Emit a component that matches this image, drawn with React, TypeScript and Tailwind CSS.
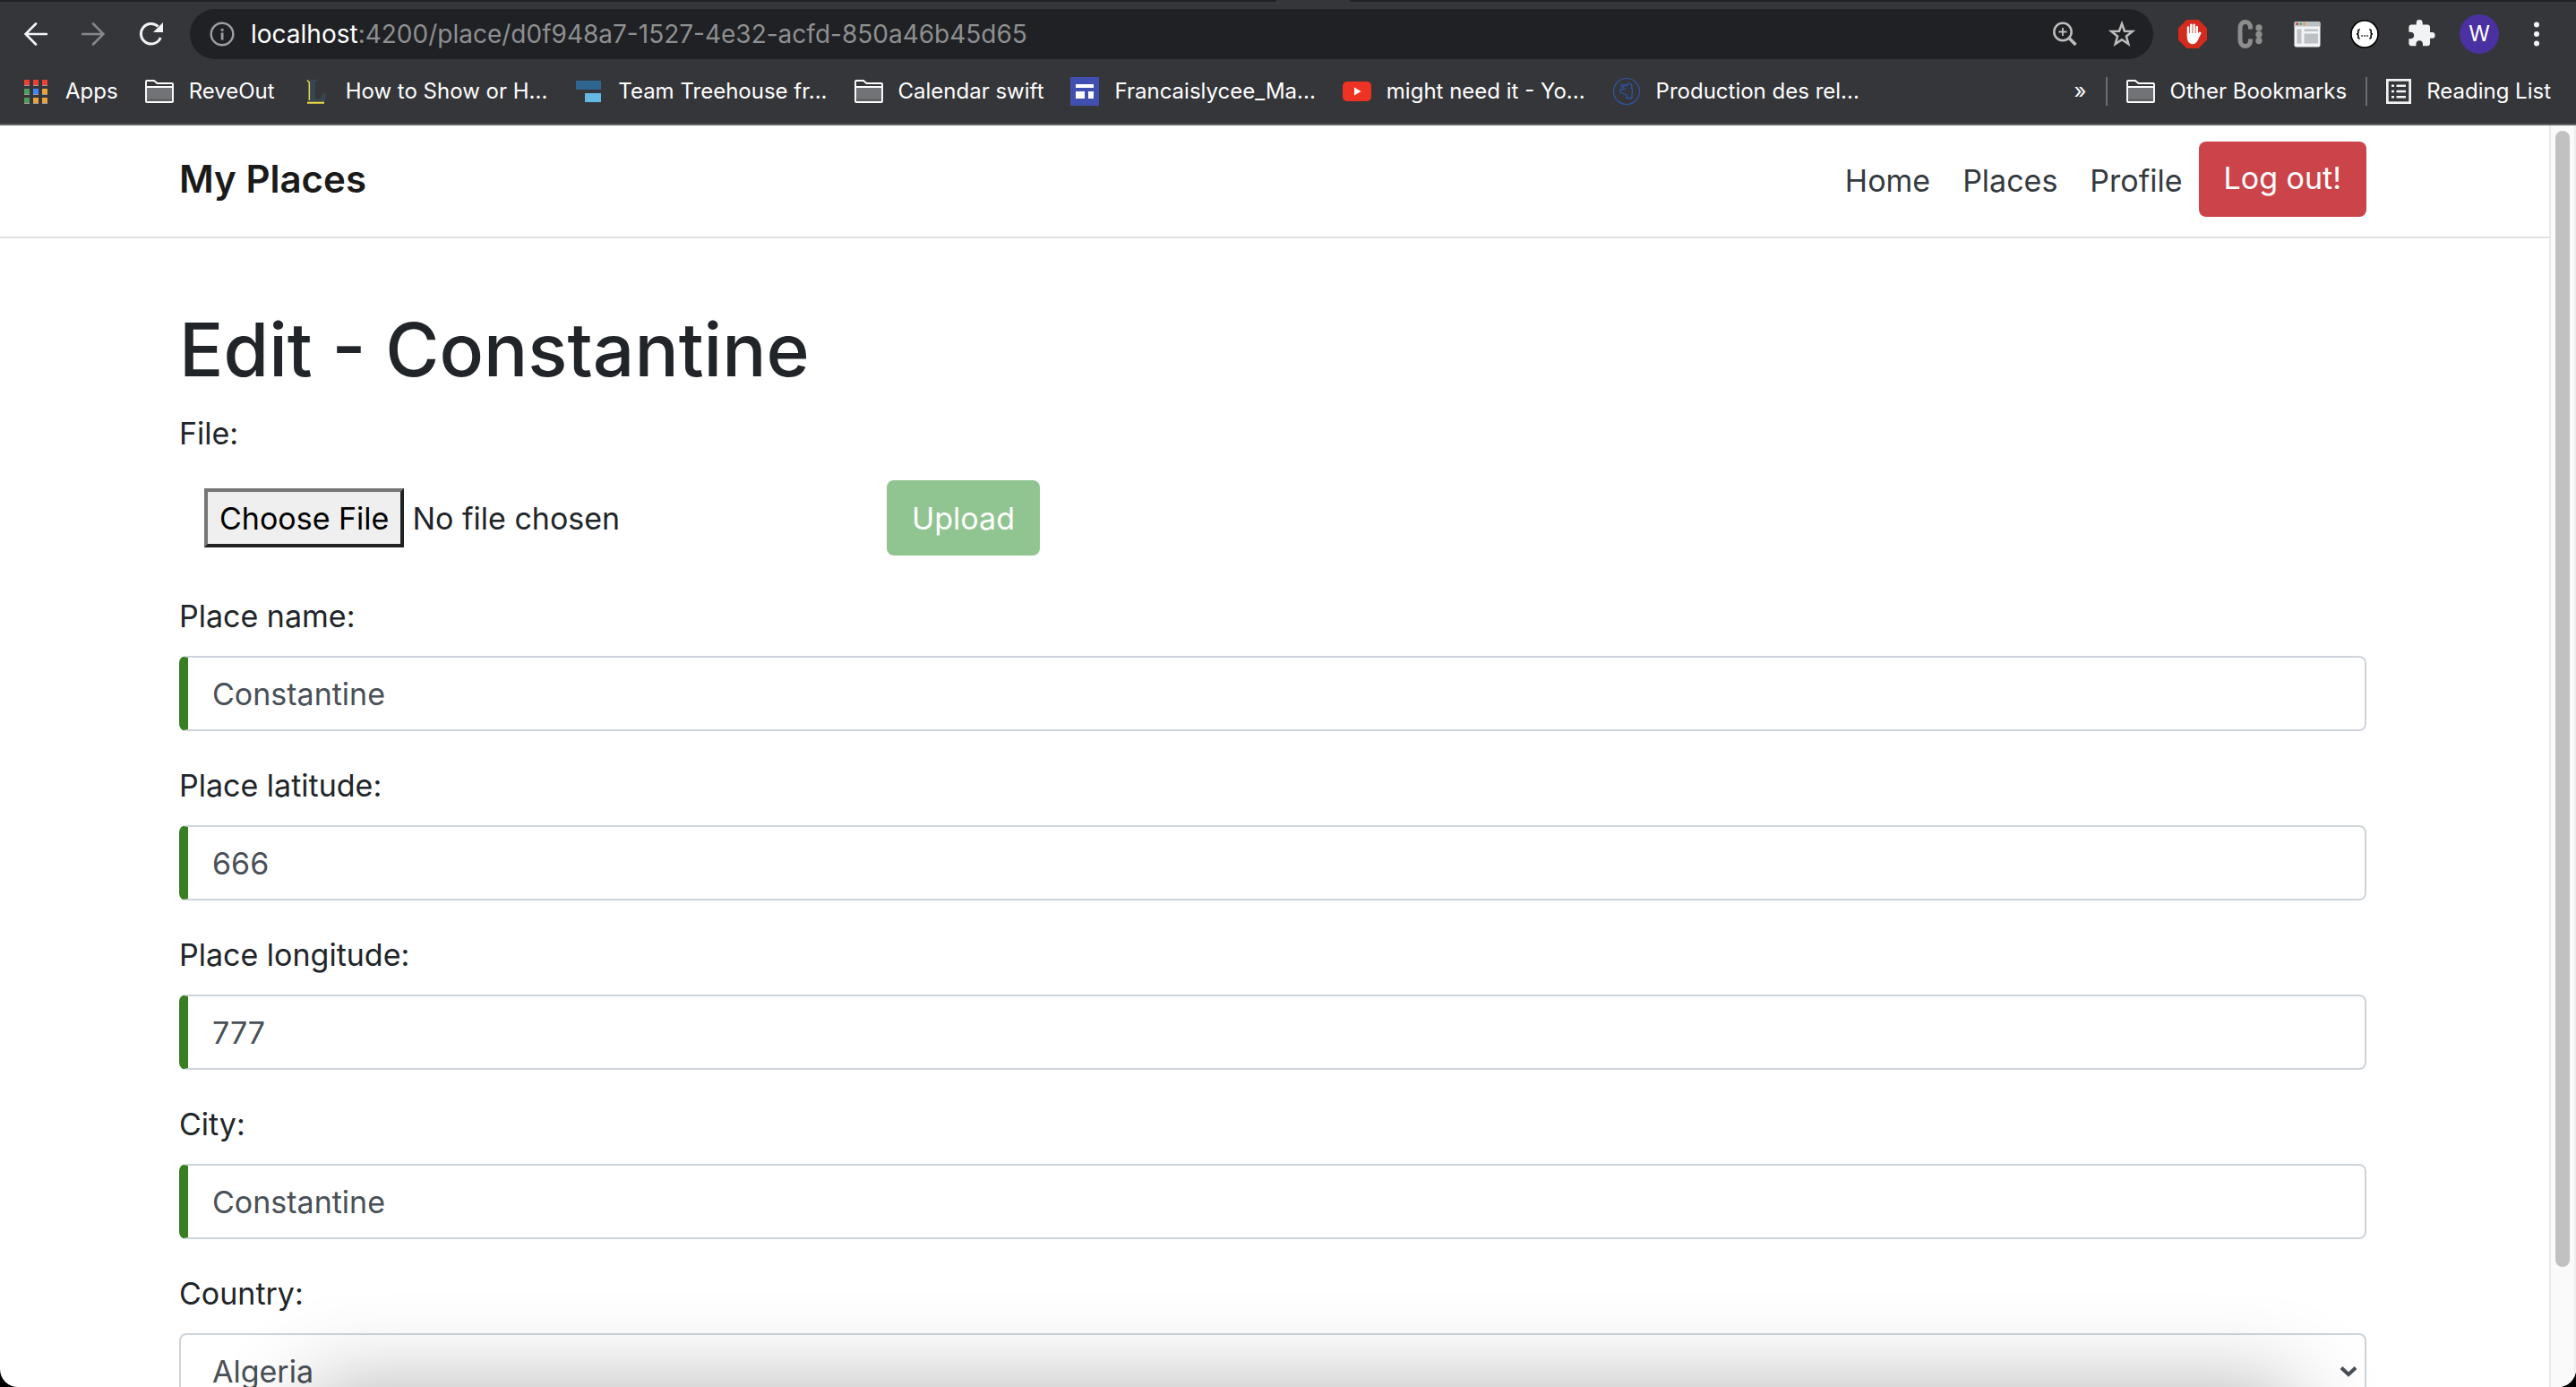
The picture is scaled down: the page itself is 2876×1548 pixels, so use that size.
import React, { useState } from "react";

function BackIcon() {
  return (
    <svg viewBox="0 0 26 26" className="size-[26px]" fill="none" stroke="currentColor" strokeWidth="2.6" strokeLinecap="round">
      <path d="M25 13H2M13 1.500L1.500 13L13 24.500" />
    </svg>
  );
}

function ForwardIcon() {
  return (
    <svg viewBox="0 0 26 26" className="size-[26px]" fill="none" stroke="currentColor" strokeWidth="2.6" strokeLinecap="round">
      <path d="M1 13H24M13 1.500L24.500 13L13 24.500" />
    </svg>
  );
}

function ReloadIcon() {
  return (
    <svg viewBox="0 0 28 28" className="size-7">
      <path d="M24.200 18A11.300 11.300 0 1 1 21.500 5.500" fill="none" stroke="currentColor" strokeWidth="3" />
      <path d="M27 1V12H16Z" fill="currentColor" />
    </svg>
  );
}

function InfoIcon() {
  return (
    <svg viewBox="0 0 28 28" className="size-7 text-[#9aa0a6]">
      <circle cx="14" cy="14" r="12.300" fill="none" stroke="currentColor" strokeWidth="2.400" />
      <path d="M12.700 8h2.800v2.800h-2.800zM12.700 12.500h2.800v8h-2.800z" fill="currentColor" />
    </svg>
  );
}

function ZoomIcon() {
  return (
    <svg viewBox="0 0 28 28" className="size-7" fill="none" stroke="currentColor">
      <circle cx="12" cy="11.500" r="9.700" strokeWidth="2.500" />
      <path d="M12 7v9M7.500 11.500h9" strokeWidth="1.800" />
      <path d="M19 18.500L26.500 26" strokeWidth="3.600" />
    </svg>
  );
}

function StarIcon() {
  return (
    <svg viewBox="0 0 30 30" className="size-[30px]" fill="none" stroke="currentColor" strokeWidth="2.500">
      <path d="M15 3.500L18 11.700L26.800 12L19.900 17.500L22.300 26L15 21.200L7.700 26L10.100 17.500L3.200 12L12 11.700Z" />
    </svg>
  );
}

function AdblockIcon() {
  return (
    <svg viewBox="0 0 32 32" className="size-8">
      <path d="M9.400 0H22.600L32 9.400V22.600L22.600 32H9.400L0 22.600V9.400Z" fill="#d52b1e" />
      <g fill="none" stroke="#fff" strokeWidth="2.500" strokeLinecap="round">
        <path d="M11 18V8.500M14.300 16V5.800M17.600 16V5.800M20.800 18V8" />
        <path d="M24 15L20.500 21.500" strokeWidth="3" />
      </g>
      <path d="M9.800 15H22V19L24 16C23 20 21.500 27.200 16 27.200C11.500 27.200 9.800 23.500 9.800 19Z" fill="#fff" />
    </svg>
  );
}

function ColonIcon() {
  return (
    <svg viewBox="0 0 32 32" className="size-8">
      <path d="M16.500 10.500V9C16.500 5 14.500 2.500 11 2.500C7 2.500 5 5.500 5 9.500V22.500C5 26.500 7 29.500 11 29.500C14.500 29.500 16.500 27 16.500 23V21.500" fill="none" stroke="#8d8d8d" strokeWidth="5" />
      <g fill="#8d8d8d">
        <circle cx="26" cy="9" r="3.700" />
        <circle cx="26" cy="16.500" r="3.700" />
        <circle cx="26" cy="23.500" r="3.700" />
      </g>
    </svg>
  );
}

function WindowIcon() {
  return (
    <svg viewBox="-1 -1 32 32" className="size-8">
      <rect x="0.500" y="1" width="29" height="28.500" rx="2" fill="#f1f3f4" />
      <path d="M0.500 6.500V3a2 2 0 0 1 2-2h25a2 2 0 0 1 2 2V6.500Z" fill="#bdc1c6" />
      <rect x="2.500" y="2.500" width="2.200" height="2.400" fill="#c5221f" />
      <rect x="6.500" y="2.500" width="2.200" height="2.400" fill="#34a853" />
      <rect x="10.500" y="2.500" width="2.200" height="2.400" fill="#f29900" />
      <g fill="#bdc1c6">
        <rect x="3.500" y="9.500" width="5" height="16" />
        <rect x="11.500" y="9.500" width="15.500" height="2.500" />
        <rect x="11.500" y="14.500" width="15.500" height="11" />
      </g>
    </svg>
  );
}

function BracesIcon() {
  return (
    <svg viewBox="0 0 32 32" className="size-8" fill="none" stroke="#000" strokeWidth="1.600">
      <circle cx="16" cy="16" r="15" fill="#fff" strokeWidth="1.500" />
      <path d="M10.800 11C8.300 11 8.900 12.500 8.900 14C8.900 15.300 8.400 16 7 16C8.400 16 8.900 16.700 8.900 18C8.900 19.500 8.300 21 10.800 21" />
      <path d="M21.200 11C23.700 11 23.100 12.500 23.100 14C23.100 15.300 23.600 16 25 16C23.600 16 23.100 16.700 23.100 18C23.100 19.500 23.700 21 21.200 21" />
      <path d="M12.300 18h1.500M15.300 18h1.500M18.300 18h1.500" />
    </svg>
  );
}

function PuzzleIcon() {
  return (
    <svg viewBox="1 1 23 23" className="size-8" fill="#f1f3f4">
      <path d="M20.500 11H19V7c0-1.100-.9-2-2-2h-4V3.500a2.500 2.500 0 0 0-5 0V5H4c-1.100 0-1.990.9-1.990 2v3.800H3.500c1.490 0 2.700 1.210 2.700 2.700s-1.210 2.700-2.700 2.700H2V20c0 1.100.9 2 2 2h3.800v-1.500c0-1.490 1.210-2.700 2.700-2.700s2.700 1.210 2.700 2.700V22H17c1.100 0 2-.9 2-2v-4h1.500a2.500 2.500 0 0 0 0-5z" />
    </svg>
  );
}

function DotsIcon() {
  return (
    <svg viewBox="0 0 6 28" className="h-7 w-[6px]" fill="#f1f3f4">
      <circle cx="3" cy="3.500" r="3" />
      <circle cx="3" cy="14" r="3" />
      <circle cx="3" cy="24.500" r="3" />
    </svg>
  );
}

const appTiles = ["#ea4335", "#ea4335", "#ea4335", "#4f9d5b", "#4285f4", "#e8a33d", "#4f9d5b", "#e8a33d", "#e8a33d"];

function AppsIcon() {
  return (
    <svg viewBox="0 0 29 27" className="h-[27px] w-[29px]">
      {appTiles.map((color, i) => (
        <g key={i}>
          <rect x={(i % 3) * 10} y={Math.floor(i / 3) * 10} width="6" height="7" fill="#9b9b9b" />
          <rect x={(i % 3) * 10} y={Math.floor(i / 3) * 10} width="6" height="6" fill={color} />
        </g>
      ))}
    </svg>
  );
}

function FolderIcon() {
  return (
    <svg viewBox="0 0 32 26" className="h-[26px] w-8">
      <path d="M1 7.500H31V25H1Z" fill="#727376" />
      <path d="M2 21.500H30V24H2Z" fill="#5c5d60" />
      <path d="M1 24V2a1 1 0 0 1 1-1H10L13.500 4H30a1 1 0 0 1 1 1V24a1 1 0 0 1-1 1H2a1 1 0 0 1-1-1ZM1 8H31" fill="none" stroke="#fff" strokeWidth="1.900" />
    </svg>
  );
}

function LetterIcon() {
  return (
    <svg viewBox="0 0 32 32" className="size-8">
      <path d="M9 3H18V4.500L15 5.500V25H20L24.500 18H27L26 27H9Z" fill="#37474f" />
      <path d="M6 3.500L8.300 6V26" fill="none" stroke="#e3d65a" strokeWidth="1.500" />
      <path d="M6 28.700H25" stroke="#f5e04a" strokeWidth="2" />
    </svg>
  );
}

function StepsIcon() {
  return (
    <svg viewBox="0 0 32 32" className="size-8">
      <rect x="2" y="4" width="28" height="10" fill="#2f6690" />
      <rect x="12" y="18" width="18" height="10" fill="#65b7e4" />
    </svg>
  );
}

function SitesIcon() {
  return (
    <svg viewBox="0 0 32 32" className="size-8">
      <rect width="32" height="32" fill="#4150b0" />
      <path d="M6 8H26V12H6ZM6 16H16V24H6ZM20 16H26V24H20Z" fill="#fff" />
    </svg>
  );
}

function VideoIcon() {
  return (
    <svg viewBox="0 0 32 32" className="size-8">
      <rect y="5" width="32" height="22" rx="5" fill="#ee3223" />
      <path d="M13 11.500L20.500 16L13 20.500Z" fill="#fff" />
    </svg>
  );
}

function SealIcon() {
  return (
    <svg viewBox="0 0 32 32" className="size-8" fill="none" stroke="#2f55a4">
      <circle cx="16" cy="16" r="14.500" strokeWidth="1.200" />
      <path d="M10 10a1.500 1.500 0 1 1 3 0a1.500 1.500 0 1 1-3 0M13.500 10a1.500 1.500 0 1 1 3 0M16 10.500a3 3 0 1 1 5.500 1.500C23 14 22.500 17 22 19V23.500H16V20L13 19L9 17V14L15 13" strokeWidth="1.300" />
    </svg>
  );
}

function ListIcon() {
  return (
    <svg viewBox="0 0 28 28" className="size-7">
      <rect x="1.300" y="1.300" width="25.400" height="25.400" fill="none" stroke="#f1f3f4" strokeWidth="2.800" />
      <path d="M6 6.500h3v2.400H6zM6 12.800h3v2.400H6zM6 19h3v2.400H6zM11.500 6.500h10.500v2.400H11.500zM11.500 12.800h10.500v2.400H11.500zM11.500 19h10.500v2.400H11.500z" fill="#f1f3f4" />
    </svg>
  );
}

const bookmarks = [
  { label: "Apps", icon: <AppsIcon /> },
  { label: "ReveOut", icon: <FolderIcon /> },
  { label: "How to Show or H...", icon: <LetterIcon /> },
  { label: "Team Treehouse fr...", icon: <StepsIcon /> },
  { label: "Calendar swift", icon: <FolderIcon /> },
  { label: "Francaislycee_Ma...", icon: <SitesIcon /> },
  { label: "might need it - Yo...", icon: <VideoIcon /> },
  { label: "Production des rel...", icon: <SealIcon /> },
];

function BookmarkButton({ label, icon }: { label: string; icon: React.ReactNode }) {
  return (
    <button type="button" className="flex shrink-0 items-center gap-[17px] whitespace-nowrap">
      {icon}
      {label}
    </button>
  );
}

function BrowserBar() {
  return (
    <header className="shrink-0 border-b-2 border-[#5f6064] bg-[#35363a] text-white">
      <div className="flex h-0.5">
        <div className="flex-[1425] rounded-br bg-[#202124]" />
        <div className="w-[82px]" />
        <div className="flex-[1369] rounded-bl bg-[#202124]" />
      </div>
      <div className="flex items-center pt-2 pr-[41px] pl-[27px]">
        <div className="flex w-[185px] items-center gap-[38px]">
          <button type="button" aria-label="Back" className="text-[#f1f3f4]"><BackIcon /></button>
          <button type="button" aria-label="Forward" className="text-[#86878a]"><ForwardIcon /></button>
          <button type="button" aria-label="Reload" className="text-[#f1f3f4]"><ReloadIcon /></button>
        </div>
        <div className="flex h-14 flex-1 items-center rounded-full bg-[#202124] pr-[20px] pl-[22px] text-[#bdbdbd]">
          <InfoIcon />
          <p className="flex-1 pl-[18px] text-[28px] leading-9 whitespace-nowrap text-[#8e8f91]">
            <span className="text-white">localhost</span>:4200/place/d0f948a7-1527-4e32-acfd-850a46b45d65
          </p>
          <div className="flex items-center gap-[35px]">
            <button type="button" aria-label="Zoom"><ZoomIcon /></button>
            <button type="button" aria-label="Bookmark this page"><StarIcon /></button>
          </div>
        </div>
        <div className="flex items-center gap-8 pl-7">
          <button type="button" aria-label="Ad blocker"><AdblockIcon /></button>
          <button type="button" aria-label="Extension"><ColonIcon /></button>
          <button type="button" aria-label="Window layout"><WindowIcon /></button>
          <button type="button" aria-label="JSON viewer"><BracesIcon /></button>
          <button type="button" aria-label="Extensions"><PuzzleIcon /></button>
        </div>
        <button type="button" className="ml-[26px] size-11 rounded-full bg-[#4a30a0] text-2xl">W</button>
        <button type="button" aria-label="Menu" className="ml-[39px]"><DotsIcon /></button>
      </div>
      <div className="flex h-[72px] items-center justify-between pr-7 pl-[27px] text-[24px] leading-8">
        <nav aria-label="Bookmarks" className="flex items-center gap-[30px]">
          {bookmarks.map((b) => (
            <BookmarkButton key={b.label} label={b.label} icon={b.icon} />
          ))}
        </nav>
        <div className="flex items-center gap-[21px]">
          <button type="button" aria-label="More bookmarks">»</button>
          <div className="h-8 w-0.5 bg-[#6b6c6f]" />
          <BookmarkButton label="Other Bookmarks" icon={<FolderIcon />} />
          <div className="h-8 w-0.5 bg-[#6b6c6f]" />
          <BookmarkButton label="Reading List" icon={<ListIcon />} />
        </div>
      </div>
    </header>
  );
}

function NavBar() {
  return (
    <nav className="flex items-center justify-between border-b-2 border-[#dee2e6] pt-[18px] pr-[204px] pb-[22px] pl-[200px]">
      <a href="#home" className="text-[42px] leading-[52px] font-semibold text-[#1a1a1a]">My Places</a>
      <div className="flex items-center text-[#343a40]">
        <a href="#home" className="px-[18px] pt-0.5">Home</a>
        <a href="#places" className="px-[18px] pt-0.5">Places</a>
        <a href="#profile" className="px-[18px] pt-0.5">Profile</a>
        <button type="button" className="h-[84px] rounded-lg bg-[#cb444a] px-7 pb-1 text-white">Log out!</button>
      </div>
    </nav>
  );
}

const fields = [
  { id: "name", label: "Place name:", value: "Constantine" },
  { id: "latitude", label: "Place latitude:", value: "666" },
  { id: "longitude", label: "Place longitude:", value: "777" },
  { id: "city", label: "City:", value: "Constantine" },
];

function TextField({ id, label, value }: { id: string; label: string; value: string }) {
  const [text, setText] = useState(value);
  return (
    <div className="mb-[34px] flex flex-col gap-[18px]">
      <label htmlFor={id}>{label}</label>
      <input
        id={id}
        type="text"
        value={text}
        onChange={(e) => setText(e.target.value)}
        className="h-[84px] w-full rounded-lg border-2 border-l-10 border-[#ced4da] border-l-[#377f22] bg-white px-[27px] text-[#495057]"
      />
    </div>
  );
}

function EditForm() {
  return (
    <form className="pt-[72px] pr-[204px] pl-[200px]">
      <h1 className="mb-[13px] text-[82px] leading-[106px] font-medium">Edit - Constantine</h1>
      <label htmlFor="file" className="block">File:</label>
      <div className="mt-[26px] mb-[41px] flex items-center pl-7">
        <input
          id="file"
          type="file"
          className="w-[762px] text-[#212529] file:mr-[9px] file:h-[66px] file:border-4 file:border-t-[#767676] file:border-r-[#212121] file:border-b-[#212121] file:border-l-[#767676] file:bg-[#efefef] file:px-[13px] file:text-black"
        />
        <button type="button" disabled className="h-[84px] rounded-lg bg-[#90c490] px-7 text-white">Upload</button>
      </div>
      {fields.map((f) => (
        <TextField key={f.id} id={f.id} label={f.label} value={f.value} />
      ))}
      <div className="flex flex-col gap-[18px]">
        <label htmlFor="country">Country:</label>
        <div className="relative">
          <select id="country" className="h-[84px] w-full appearance-none rounded-lg border-2 border-[#ced4da] bg-white px-[35px] text-[#495057]">
            <option>Algeria</option>
          </select>
          <svg viewBox="0 0 20 14" className="pointer-events-none absolute top-[36px] right-[10px] h-[14px] w-5" fill="none" stroke="#495057" strokeWidth="4">
            <path d="M2 2.500L10 10L18 2.500" />
          </svg>
        </div>
      </div>
    </form>
  );
}

export default function App() {
  return (
    <div className="h-screen bg-black font-['Inter',sans-serif]">
      <div className="relative flex h-full flex-col overflow-hidden rounded-b-[20px] bg-white">
        <BrowserBar />
        <div className="flex min-h-0 flex-1">
          <main className="min-w-0 flex-1 overflow-hidden text-[34px] leading-[53px] text-[#212529]">
            <NavBar />
            <EditForm />
          </main>
          <div className="flex w-[30px] justify-center border-r-2 border-l-2 border-r-[#eeeeee] border-l-[#e8e8e8] bg-[#fafafa] pt-1.5">
            <div className="h-[calc(90%+6px)] w-4 rounded-full bg-[#c1c1c1]" />
          </div>
        </div>
        <div className="pointer-events-none absolute top-full right-[11%] left-[12%] h-40 shadow-[0_0_100px_rgba(0,0,0,0.3)]" />
      </div>
    </div>
  );
}
